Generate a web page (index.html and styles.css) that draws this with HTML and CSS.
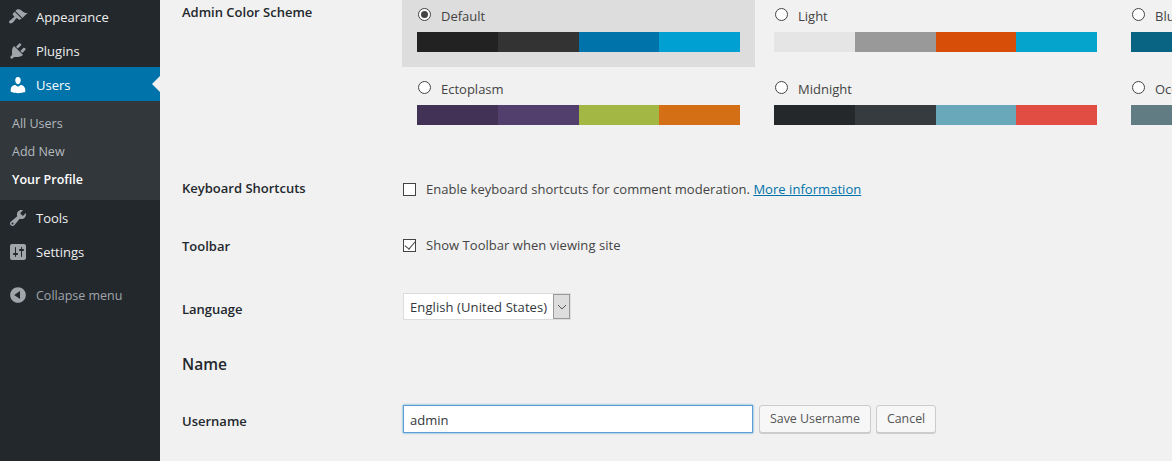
FILE: index.html
```html
<!DOCTYPE html>
<html lang="en">
<head>
    <meta charset="UTF-8">
    <meta name="viewport" content="width=device-width, initial-scale=1.0">
    <title>Profile</title>
    <link rel="stylesheet" href="styles.css">
</head>
<body>
    <nav class="sidebar">
        <a class="menu-item" href="#">
            <svg class="menu-icon" viewBox="0 0 20 20"><path d="M14.48 11.06L7.41 3.99l1.5-1.5c.5-.56 2.3-.47 3.51.32 1.21.8 1.43 1.28 2.91 2.1 1.18.64 2.45 1.26 4.45.85zm-.71.71L6.7 4.7 4.93 6.47c-.39.39-.39 1.02 0 1.41l1.06 1.06c.39.39.39 1.03 0 1.42-.6.6-1.43 1.11-2.21 1.69-.35.26-.7.53-1.01.84C1.43 13.23.4 14.85 1.5 15.95s2.72.07 4.06-1.28c.31-.31.58-.66.84-1.01.58-.78 1.09-1.61 1.69-2.21.39-.39 1.03-.39 1.42 0l1.06 1.06c.39.39 1.02.39 1.41 0z"/></svg>
            Appearance
        </a>
        <a class="menu-item" href="#">
            <svg class="menu-icon" viewBox="0 0 20 20"><path d="M13.11 4.36L9.87 7.6 8 5.73l3.24-3.24c.35-.34 1.05-.2 1.56.32.52.51.66 1.21.31 1.55zm-8 1.77l.91-1.12 9.01 9.01-1.19.84c-.71.71-2.63 1.16-3.82 1.16H6.14L4.9 17.26c-.59.59-1.54.59-2.12 0-.59-.58-.59-1.53 0-2.12l1.24-1.24v-3.88c0-1.13.4-3.19 1.09-3.89zm7.26 3.97l3.24-3.24c.34-.35 1.04-.21 1.55.31.52.51.66 1.21.31 1.55l-3.24 3.25z"/></svg>
            Plugins
        </a>
        <a class="menu-item current" href="#">
            <svg class="menu-icon" viewBox="0 0 20 20"><path d="M10 9.25c-2.27 0-2.73-3.44-2.73-3.44C7 4.02 7.82 2 9.97 2c2.16 0 2.98 2.02 2.71 3.81 0 0-.41 3.44-2.68 3.44zm0 2.57L12.72 10c2.39 0 4.52 2.33 4.52 4.53v2.49s-3.65 1.13-7.24 1.13c-3.65 0-7.24-1.13-7.24-1.13v-2.49c0-2.25 1.94-4.48 4.47-4.48z"/></svg>
            Users
        </a>
        <div class="submenu">
            <a href="#">All Users</a>
            <a href="#">Add New</a>
            <a class="active" href="#">Your Profile</a>
        </div>
        <a class="menu-item" href="#">
            <svg class="menu-icon" viewBox="0 0 20 20"><path d="M16.68 9.77c-1.34 1.34-3.3 1.67-4.95.99l-5.41 6.52c-.99.99-2.59.99-3.58 0s-.99-2.59 0-3.57l6.52-5.42c-.68-1.65-.35-3.61.99-4.95 1.28-1.28 3.12-1.62 4.72-1.06l-2.89 2.89 2.82 2.82 2.86-2.87c.53 1.58.18 3.39-1.08 4.65zM3.81 16.21c.4.39 1.04.39 1.43 0 .4-.4.4-1.04 0-1.43-.39-.4-1.03-.4-1.43 0-.39.39-.39 1.03 0 1.43z"/></svg>
            Tools
        </a>
        <a class="menu-item" href="#">
            <svg class="menu-icon" viewBox="0 0 20 20"><path d="M18 16V4c0-1.1-.9-2-2-2H4c-1.1 0-2 .9-2 2v12c0 1.1.9 2 2 2h12c1.1 0 2-.9 2-2zM8 11h1c.55 0 1 .45 1 1s-.45 1-1 1H8v1.5c0 .28-.22.5-.5.5s-.5-.22-.5-.5V13H6c-.55 0-1-.45-1-1s.45-1 1-1h1V5.5c0-.28.22-.5.5-.5s.5.22.5.5V11zm5-2h-1c-.55 0-1-.45-1-1s.45-1 1-1h1V5.5c0-.28.22-.5.5-.5s.5.22.5.5V7h1c.55 0 1 .45 1 1s-.45 1-1 1h-1v5.5c0 .28-.22.5-.5.5s-.5-.22-.5-.5V9z"/></svg>
            Settings
        </a>
        <a class="menu-item collapse" href="#">
            <svg class="menu-icon" viewBox="0 0 20 20"><path d="M10 2.16c4.33 0 7.84 3.51 7.84 7.84s-3.51 7.84-7.84 7.84S2.16 14.33 2.16 10 5.71 2.16 10 2.16zm2 11.72V6.12L6.18 9.97z"/></svg>
            Collapse menu
        </a>
    </nav>

    <main class="content">
        <div class="row row-scheme">
            <div class="label label-scheme">Admin Color Scheme</div>
            <div class="schemes">
                <label class="scheme selected">
                    <span class="scheme-name"><input type="radio" name="scheme" checked> Default</span>
                    <span class="bar">
                        <i class="c-222"></i><i class="c-333"></i><i class="c-0073"></i><i class="c-00a0"></i>
                    </span>
                </label>
                <label class="scheme">
                    <span class="scheme-name"><input type="radio" name="scheme"> Light</span>
                    <span class="bar">
                        <i class="c-e5"></i><i class="c-99"></i><i class="c-d6"></i><i class="c-04"></i>
                    </span>
                </label>
                <label class="scheme">
                    <span class="scheme-name"><input type="radio" name="scheme"> Blue</span>
                    <span class="bar"><i class="c-096"></i><i class="c-096"></i><i class="c-096"></i><i class="c-096"></i></span>
                </label>
                <label class="scheme">
                    <span class="scheme-name"><input type="radio" name="scheme"> Ectoplasm</span>
                    <span class="bar">
                        <i class="c-41"></i><i class="c-52"></i><i class="c-a3"></i><i class="c-d4"></i>
                    </span>
                </label>
                <label class="scheme">
                    <span class="scheme-name"><input type="radio" name="scheme"> Midnight</span>
                    <span class="bar">
                        <i class="c-25"></i><i class="c-36"></i><i class="c-69"></i><i class="c-e1"></i>
                    </span>
                </label>
                <label class="scheme">
                    <span class="scheme-name"><input type="radio" name="scheme"> Ocean</span>
                    <span class="bar"><i class="c-62"></i><i class="c-62"></i><i class="c-62"></i><i class="c-62"></i></span>
                </label>
            </div>
        </div>

        <div class="row row-keys">
            <div class="label">Keyboard Shortcuts</div>
            <label class="check"><input type="checkbox"><span>Enable keyboard shortcuts for comment moderation. <a href="#">More information</a></span></label>
        </div>

        <div class="row row-toolbar">
            <div class="label">Toolbar</div>
            <label class="check"><input type="checkbox" checked><span>Show Toolbar when viewing site</span></label>
        </div>

        <div class="row row-lang">
            <div class="label">Language</div>
            <div class="select">
                <span class="select-value">English (United States)</span>
                <span class="select-arrow">
                    <svg viewBox="0 0 10 6" width="10" height="6"><path d="M1 1l4 4 4-4" fill="none" stroke="#555" stroke-width="1"/></svg>
                </span>
            </div>
        </div>

        <h2 class="section-title">Name</h2>

        <div class="row row-user">
            <div class="label">Username</div>
            <input class="text-input" type="text" value="admin">
            <button class="btn btn-save">Save Username</button>
            <button class="btn">Cancel</button>
        </div>
    </main>
</body>
</html>
```

FILE: styles.css
```css
* {
    margin: 0;
    padding: 0;
    box-sizing: border-box;
}

html, body {
    height: 461px;
    overflow: hidden;
}

body {
    display: flex;
    background: #f1f1f1;
    color: #444;
    font-family: "Open Sans", sans-serif;
    font-size: 13px;
}

a {
    text-decoration: none;
}

/* Sidebar */
.sidebar {
    width: 160px;
    flex-shrink: 0;
    margin-top: -1px;
    background: #23282d;
}

.menu-item {
    position: relative;
    display: flex;
    align-items: center;
    gap: 8px;
    height: 34px;
    padding: 2px 0 0 8px;
    color: #eee;
    font-size: 13px;
}

.menu-icon {
    width: 20px;
    height: 20px;
    fill: #a0a5aa;
}

.current {
    background: #0073aa;
    color: #fff;
}

.current .menu-icon {
    fill: #fff;
}

.current::after {
    content: "";
    position: absolute;
    right: 0;
    top: 9px;
    border: 8px solid transparent;
    border-left: 0;
    border-right-color: #f1f1f1;
}

.submenu {
    display: flex;
    flex-direction: column;
    height: 99px;
    padding-top: 9px;
    background: #32373c;
}

.submenu a {
    height: 28px;
    padding-left: 12px;
    line-height: 28px;
    color: #b4b9be;
    font-size: 12.5px;
}

.submenu .active {
    color: #fff;
    font-weight: 600;
}

.collapse {
    margin-top: 9px;
    color: #a0a5aa;
    font-size: 12.5px;
}

/* Form */
.content {
    flex: 1;
    min-width: 0;
    padding-left: 22px;
    overflow: hidden;
}

.row {
    display: flex;
    align-items: center;
}

.label {
    width: 220px;
    flex-shrink: 0;
    color: #23282d;
    font-weight: 600;
}

.row-scheme {
    align-items: flex-start;
    height: 146px;
}

.label-scheme {
    margin-top: 3px;
}

.schemes {
    display: grid;
    grid-template-columns: repeat(3, 353px);
    grid-auto-rows: 67px;
    column-gap: 4px;
    row-gap: 6px;
}

.scheme {
    padding: 7px 15px 15px;
}

.selected {
    background: #ddd;
}

.scheme-name {
    display: flex;
    align-items: center;
    gap: 10px;
    height: 18px;
    margin-bottom: 7px;
}

.bar {
    display: flex;
    height: 20px;
}

.bar i {
    flex: 1;
}

.c-222 { background: #222; }
.c-333 { background: #333; }
.c-0073 { background: #0073aa; }
.c-00a0 { background: #00a0d2; }
.c-e5 { background: #e5e5e5; }
.c-99 { background: #999; }
.c-d6 { background: #d64e07; }
.c-04 { background: #04a4cc; }
.c-096 { background: #096484; }
.c-41 { background: #413256; }
.c-52 { background: #523f6d; }
.c-a3 { background: #a3b745; }
.c-d4 { background: #d46f15; }
.c-25 { background: #25282b; }
.c-36 { background: #363b3f; }
.c-69 { background: #69a8bb; }
.c-e1 { background: #e14d43; }
.c-62 { background: #627c83; }

input[type="radio"], input[type="checkbox"] {
    appearance: none;
    position: relative;
    width: 13px;
    height: 13px;
    flex-shrink: 0;
    background: #fff;
    border: 1px solid #444;
}

input[type="radio"] {
    margin: 0 0 3px 1px;
    border-radius: 50%;
}

input[type="radio"]:checked::before {
    content: "";
    position: absolute;
    left: 2px;
    top: 2px;
    width: 7px;
    height: 7px;
    border-radius: 50%;
    background: #444;
}

input[type="checkbox"]:checked::before {
    content: "";
    position: absolute;
    left: 3px;
    top: -1px;
    width: 5px;
    height: 9px;
    border: solid #444;
    border-width: 0 1px 1px 0;
    transform: rotate(40deg);
}

.check {
    display: flex;
    align-items: center;
    gap: 10px;
    margin-left: 1px;
    letter-spacing: 0.04px;
    white-space: nowrap;
}

.check a {
    color: #0073aa;
    text-decoration: underline;
}

.row-keys {
    height: 22px;
    margin-top: 31px;
}

.row-keys .check {
    padding-top: 2px;
}

.row-toolbar {
    height: 22px;
    margin-top: 35px;
}

.row-toolbar .label {
    margin-top: 2px;
}

.row-lang {
    height: 28px;
    margin-top: 37px;
}

.row-lang .label {
    margin-top: 4px;
}

.select {
    display: flex;
    width: 168px;
    height: 27px;
    margin: 0 0 1px 1px;
    background: #fff;
    border: 1px solid #ddd;
}

.select-value {
    flex: 1;
    padding-left: 6px;
    line-height: 27px;
    color: #32373c;
    letter-spacing: 0.09px;
    white-space: nowrap;
}

.select-arrow {
    display: flex;
    align-items: center;
    justify-content: center;
    width: 17px;
    background: #ddd;
    border: 1px solid #999;
}

.section-title {
    height: 24px;
    margin-top: 31px;
    color: #23282d;
    font-size: 15.5px;
    font-weight: 600;
    line-height: 24px;
}

.row-user {
    height: 30px;
    margin-top: 29px;
}

.row-user .label {
    margin-top: 2px;
}

.text-input {
    width: 350px;
    height: 28px;
    margin: 0 0 2px 1px;
    padding: 2px 6px 0;
    background: #fff;
    border: 1px solid #5b9dd9;
    box-shadow: 0 0 2px rgba(30, 140, 190, 0.8);
    color: #32373c;
    font: inherit;
    outline: none;
}

.btn {
    height: 28px;
    margin: 0 0 3px 5px;
    padding: 0 10px;
    background: #f7f7f7;
    border: 1px solid #ccc;
    border-radius: 3px;
    box-shadow: 0 1px 0 #ccc;
    color: #555;
    font: inherit;
    font-size: 12.4px;
}

.btn-save {
    margin-left: 6px;
}
```
